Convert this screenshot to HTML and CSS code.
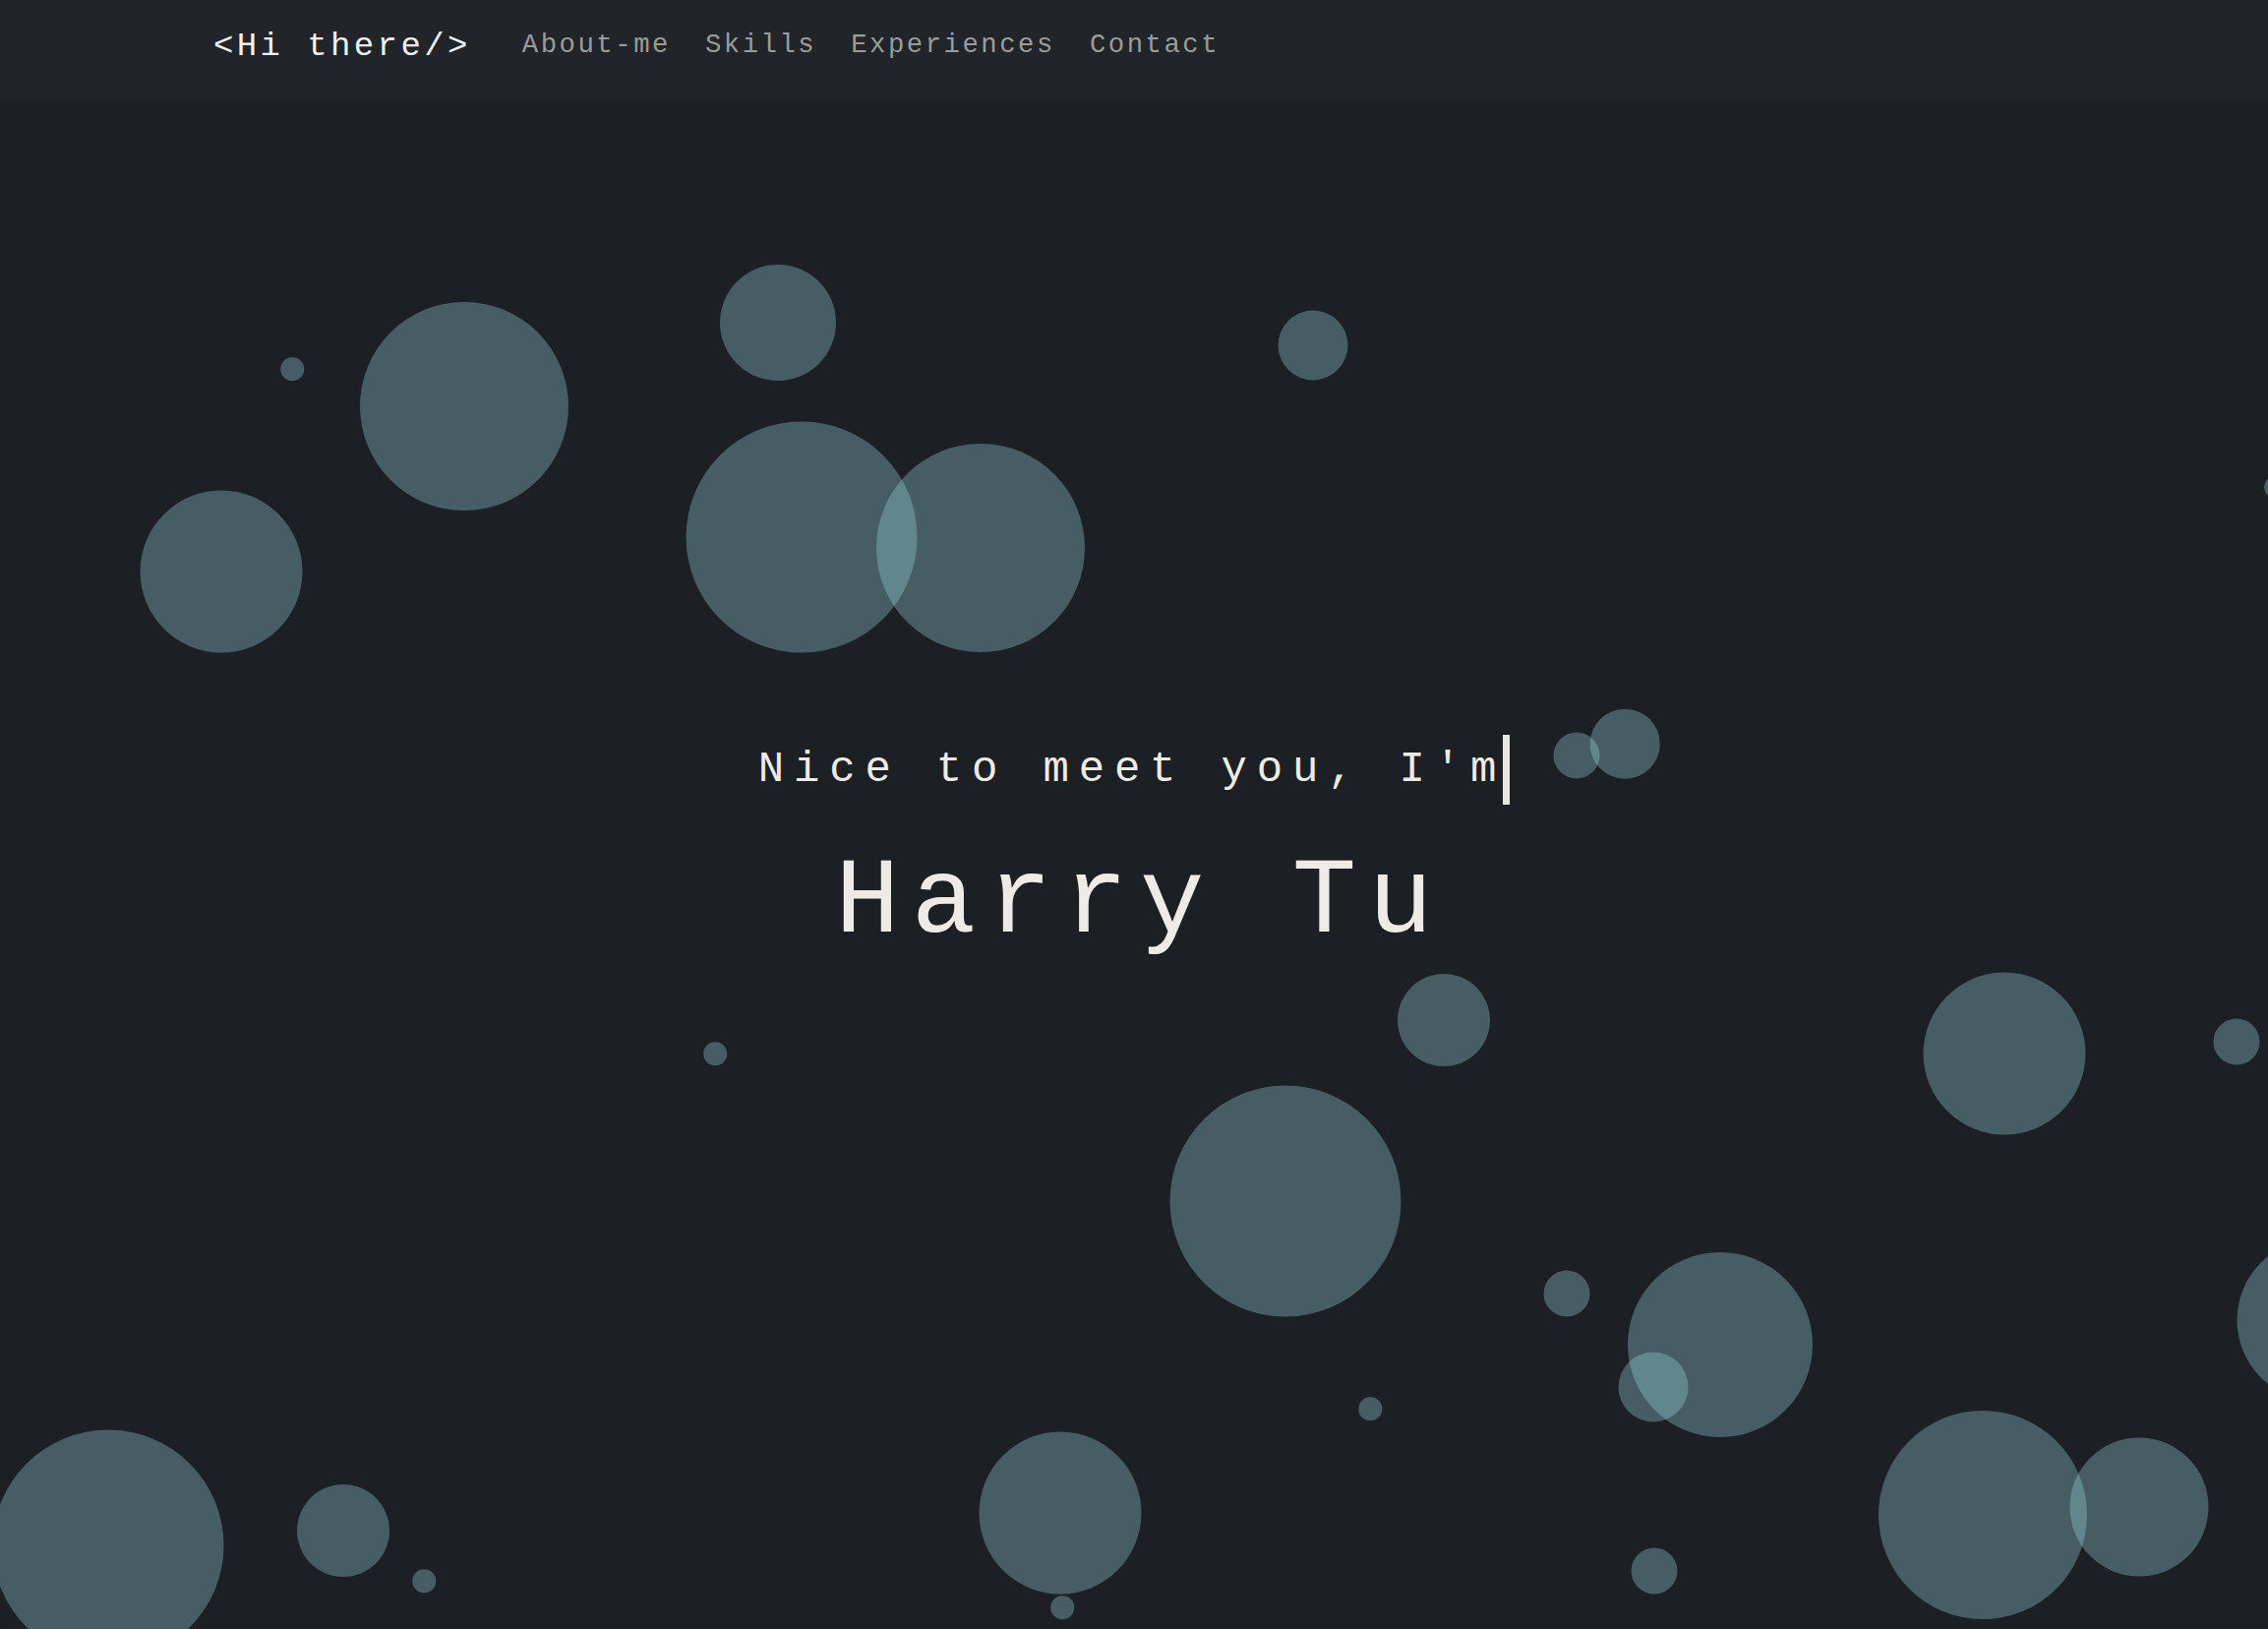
FILE: index.html
```html
<!DOCTYPE html>
<html lang="en">
<head>
<meta charset="utf-8">
<title>Harry Tu</title>
<link rel="stylesheet" href="styles.css">
</head>
<body>
<header class="nav">
  <a class="logo" href="#">&lt;Hi there/&gt;</a>
  <nav class="links">
    <a href="#about">About-me</a>
    <a href="#skills">Skills</a>
    <a href="#experiences">Experiences</a>
    <a href="#contact">Contact</a>
  </nav>
</header>
<main class="hero">
  <div class="bubbles">
    <span class="bubble" style="--x:297px;--y:274px;--d:23.5px"></span>
    <span class="bubble" style="--x:472px;--y:312px;--d:212px"></span>
    <span class="bubble" style="--x:225px;--y:480px;--d:165px"></span>
    <span class="bubble" style="--x:791px;--y:227px;--d:118px"></span>
    <span class="bubble" style="--x:815px;--y:445px;--d:235px"></span>
    <span class="bubble" style="--x:997px;--y:456px;--d:212px"></span>
    <span class="bubble" style="--x:1335px;--y:250px;--d:71px"></span>
    <span class="bubble" style="--x:2314px;--y:394px;--d:23.5px"></span>
    <span class="bubble" style="--x:1603px;--y:667px;--d:47px"></span>
    <span class="bubble" style="--x:1652px;--y:655px;--d:70.6px"></span>
    <span class="bubble" style="--x:1468px;--y:936px;--d:94px"></span>
    <span class="bubble" style="--x:727px;--y:970px;--d:23.5px"></span>
    <span class="bubble" style="--x:1307px;--y:1120px;--d:235px"></span>
    <span class="bubble" style="--x:2038px;--y:970px;--d:165px"></span>
    <span class="bubble" style="--x:2274px;--y:958px;--d:47px"></span>
    <span class="bubble" style="--x:1593px;--y:1214px;--d:47px"></span>
    <span class="bubble" style="--x:1749px;--y:1266px;--d:188px"></span>
    <span class="bubble" style="--x:1681px;--y:1309px;--d:71px"></span>
    <span class="bubble" style="--x:1393px;--y:1331px;--d:23.5px"></span>
    <span class="bubble" style="--x:2357px;--y:1241px;--d:165px"></span>
    <span class="bubble" style="--x:110px;--y:1470px;--d:235px"></span>
    <span class="bubble" style="--x:349px;--y:1455px;--d:94px"></span>
    <span class="bubble" style="--x:431px;--y:1506px;--d:23.5px"></span>
    <span class="bubble" style="--x:1078px;--y:1437px;--d:165px"></span>
    <span class="bubble" style="--x:1080px;--y:1533px;--d:23.5px"></span>
    <span class="bubble" style="--x:1682px;--y:1496px;--d:47px"></span>
    <span class="bubble" style="--x:2016px;--y:1439px;--d:212px"></span>
    <span class="bubble" style="--x:2175px;--y:1431px;--d:141px"></span>
  </div>
  <div class="intro">
    <p class="greeting"><span class="greeting-text">Nice to meet you, I'm</span><span class="cursor"></span></p>
    <h1 class="name">Harry Tu</h1>
  </div>
</main>
</body>
</html>
```

FILE: styles.css
```css
* { box-sizing: border-box; }

html, body {
  margin: 0;
  padding: 0;
  height: 100%;
  overflow: hidden;
  background: #1c1f23;
  font-family: "Liberation Mono", "DejaVu Sans Mono", monospace;
}

.nav {
  height: 101px;
  background: #212428;
  display: flex;
  align-items: center;
  padding-left: 217px;
  position: relative;
  z-index: 2;
}

.logo {
  color: #f0f0f0;
  text-decoration: none;
  font-size: 34px;
  letter-spacing: 3.4px;
  line-height: 1;
  margin-top: -8px;
}

.links {
  display: flex;
  gap: 35px;
  margin-left: 52px;
  margin-top: -10px;
}

.links a {
  color: #9b9b9b;
  text-decoration: none;
  font-size: 27.3px;
  letter-spacing: 2.5px;
  line-height: 1;
}

.hero {
  position: relative;
  height: calc(100vh - 101px);
  overflow: hidden;
  display: flex;
  align-items: center;
  justify-content: center;
  padding-bottom: 30px;
}

.bubbles {
  position: absolute;
  inset: 0;
}

.bubble {
  position: absolute;
  left: var(--x);
  top: var(--y);
  width: var(--d);
  height: var(--d);
  transform: translate(-50%, -50%);
  border-radius: 50%;
  background: rgba(148, 211, 221, 0.35);
}

.intro {
  position: relative;
  z-index: 1;
  text-align: center;
  color: #eeebe6;
}

.greeting {
  margin: 0;
  font-size: 44px;
  letter-spacing: 9.8px;
  line-height: 71px;
  height: 71px;
  padding-left: 0;
}

.greeting-text {
  vertical-align: top;
}

.cursor {
  display: inline-block;
  vertical-align: top;
  width: 7px;
  height: 71px;
  margin-left: -3px;
  background: #e8e6e1;
}

.name {
  margin: 39px 0 0;
  font-weight: normal;
  font-size: 109px;
  letter-spacing: 12px;
  line-height: 1.133;
  padding-left: 12px;
}
```
